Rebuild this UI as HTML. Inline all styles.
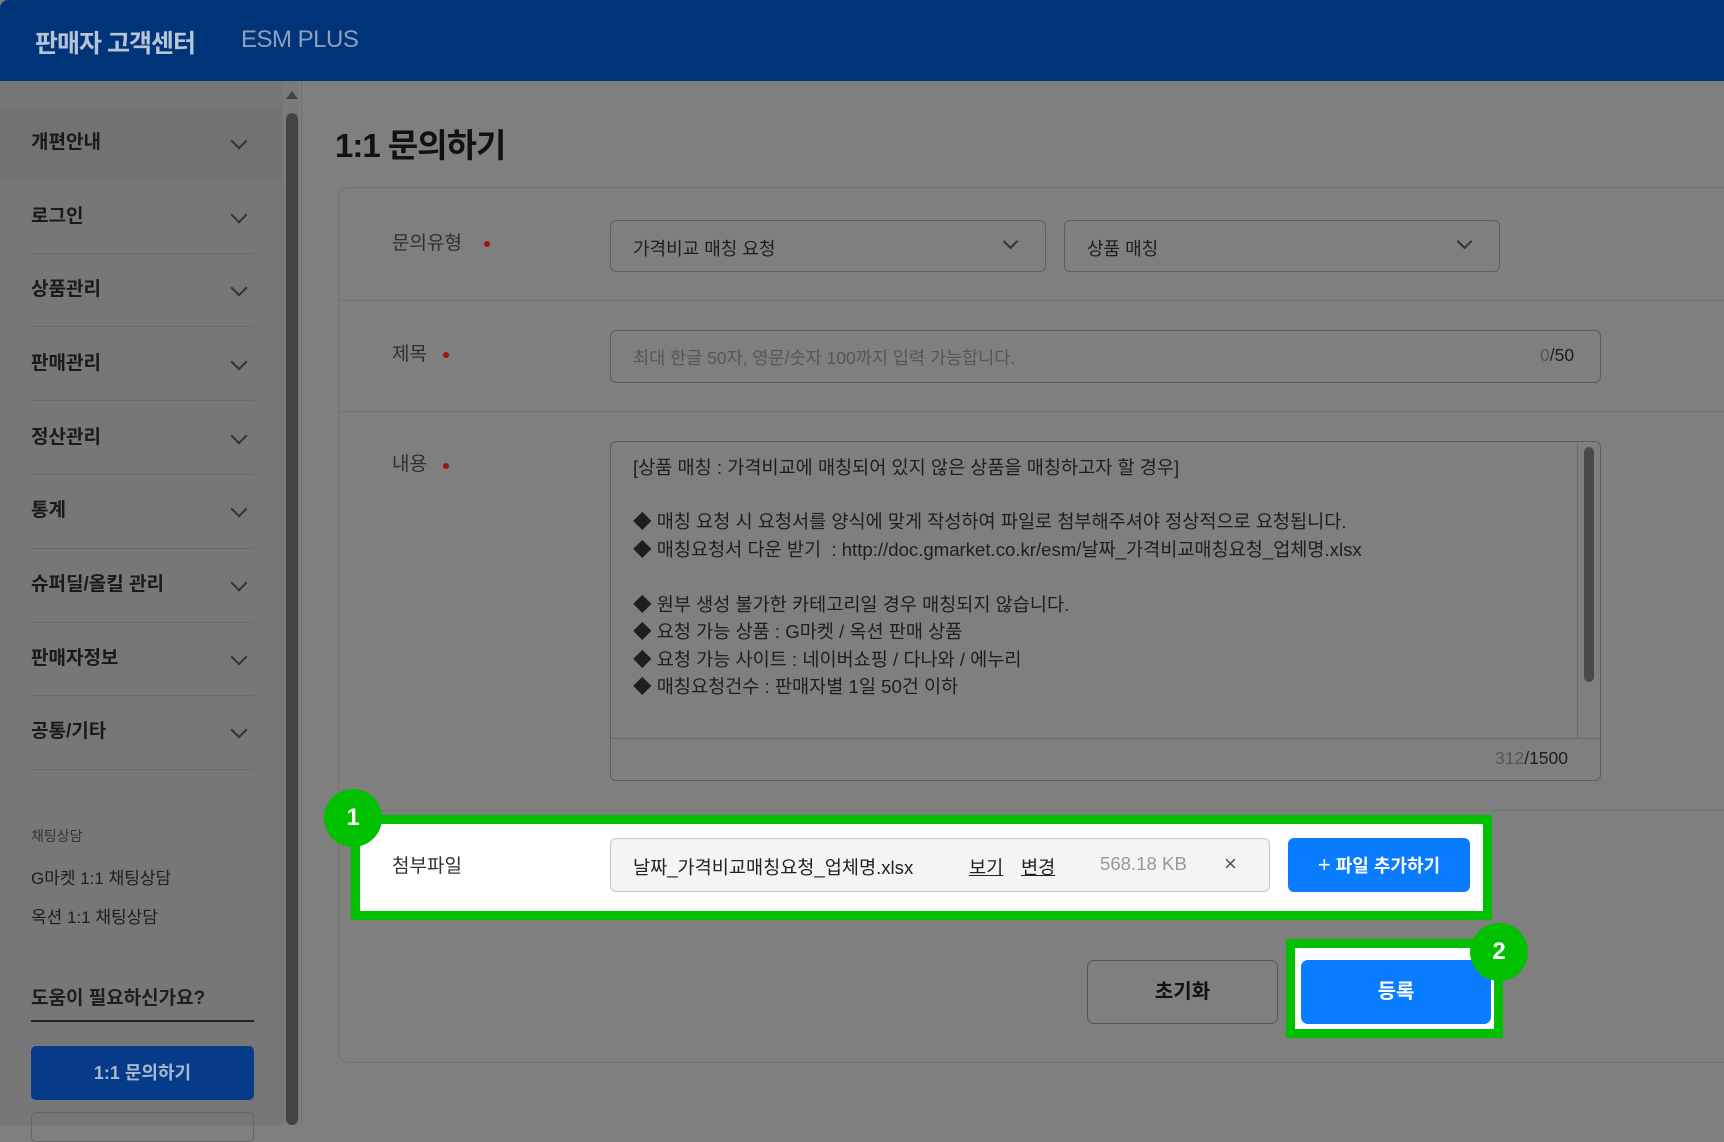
<!DOCTYPE html>
<html><head><meta charset="utf-8"><style>
*{margin:0;padding:0;box-sizing:border-box}
body{width:1724px;height:1125px;overflow:hidden;background:#7f7f7f;font-family:"Liberation Sans","Noto Sans CJK KR",sans-serif;position:relative;color:#1e1e1e}
.a{position:absolute}
.hdr{left:0;top:0;width:1724px;height:81px;background:#003478;border-top-left-radius:8px}
.side{left:0;top:81px;width:284px;height:1044px;background:#777}
.item{left:31px;font-size:19px;font-weight:bold;color:#1a1a1a;line-height:24px}
.chev{left:233px;width:12px;height:12px;border-right:2px solid #333;border-bottom:2px solid #333;transform:rotate(45deg)}
.sep{left:31px;width:223px;height:1px;background:#6a6a6a}
.lbl{left:392px;font-size:19px;color:#2e2e2e;line-height:24px}
.dot{width:6px;height:6px;border-radius:50%;background:#a81010}
.box{border:1px solid #5e5e5e;border-radius:6px;background:#7f7f7f}
.ta{font-size:18.6px;color:#1e1e1e;left:633px;line-height:22px;white-space:nowrap}
.hr{left:338px;width:1386px;height:1px;background:#747474}
.badge{width:58px;height:58px;border-radius:50%;background:#00c000;color:#fff;font-weight:bold;font-size:24px;text-align:center;line-height:58px}
</style></head><body>
<div class="a hdr"></div>
<div class="a" style="left:35px;top:24px;font-size:25px;font-weight:bold;color:#b7c3d6;letter-spacing:-1px">판매자 고객센터</div>
<div class="a" style="left:241px;top:26px;font-size:24px;color:#8d9fbd;letter-spacing:-0.5px">ESM PLUS</div>

<div class="a side"></div>
<div class="a" style="left:0;top:107px;width:282px;height:72px;background:#727272"></div>
<div class="a" style="left:285px;top:81px;width:14px;height:1044px;background:#7a7a7a"></div>
<div class="a" style="left:286px;top:91px;width:0;height:0;border-left:6px solid transparent;border-right:6px solid transparent;border-bottom:8px solid #444"></div>
<div class="a" style="left:286px;top:113px;width:12px;height:1012px;background:#444;border-radius:6px"></div>
<div class="a" style="left:301px;top:81px;width:1px;height:1044px;background:#727272"></div>

<div class="a item" style="top:131px">개편안내</div><div class="a chev" style="top:135px"></div>
<div class="a sep" style="top:253px"></div>
<div class="a item" style="top:205px">로그인</div><div class="a chev" style="top:209px"></div>
<div class="a item" style="top:278px">상품관리</div><div class="a chev" style="top:282px"></div>
<div class="a sep" style="top:326px"></div>
<div class="a item" style="top:352px">판매관리</div><div class="a chev" style="top:356px"></div>
<div class="a sep" style="top:400px"></div>
<div class="a item" style="top:426px">정산관리</div><div class="a chev" style="top:430px"></div>
<div class="a sep" style="top:474px"></div>
<div class="a item" style="top:499px">통계</div><div class="a chev" style="top:503px"></div>
<div class="a sep" style="top:548px"></div>
<div class="a item" style="top:573px">슈퍼딜/올킬 관리</div><div class="a chev" style="top:577px"></div>
<div class="a sep" style="top:622px"></div>
<div class="a item" style="top:647px">판매자정보</div><div class="a chev" style="top:651px"></div>
<div class="a sep" style="top:695px"></div>
<div class="a item" style="top:720px">공통/기타</div><div class="a chev" style="top:724px"></div>
<div class="a sep" style="top:769px"></div>
<div class="a" style="left:31px;top:826px;font-size:14px;color:#333">채팅상담</div>
<div class="a" style="left:31px;top:864px;font-size:17px;color:#1e1e1e">G마켓 1:1 채팅상담</div>
<div class="a" style="left:31px;top:903px;font-size:17px;color:#1e1e1e">옥션 1:1 채팅상담</div>
<div class="a" style="left:31px;top:983px;font-size:19px;font-weight:bold;color:#1e1e1e">도움이 필요하신가요?</div>
<div class="a" style="left:31px;top:1020px;width:223px;height:2px;background:#222"></div>
<div class="a" style="left:31px;top:1046px;width:223px;height:54px;background:#063b8a;border-radius:5px;color:#a9b7cf;font-size:18px;font-weight:bold;text-align:center;line-height:54px">1:1 문의하기</div>
<div class="a" style="left:31px;top:1112px;width:223px;height:30px;border:1px solid #666;border-radius:5px"></div>

<div class="a" style="left:335px;top:119px;font-size:33px;font-weight:bold;color:#111;letter-spacing:-1px">1:1 문의하기</div>
<div class="a" style="left:338px;top:187px;width:1400px;height:876px;border:1px solid #737373;border-radius:10px"></div>

<div class="a lbl" style="top:232px">문의유형</div><div class="a dot" style="left:484px;top:241px"></div>
<div class="a box" style="left:610px;top:220px;width:436px;height:52px"></div>
<div class="a" style="left:633px;top:235px;font-size:18px">가격비교 매칭 요청</div>
<div class="a chev" style="left:1005px;top:236px;width:11px;height:11px"></div>
<div class="a box" style="left:1064px;top:220px;width:436px;height:52px"></div>
<div class="a" style="left:1087px;top:235px;font-size:18px">상품 매칭</div>
<div class="a chev" style="left:1459px;top:236px;width:11px;height:11px"></div>
<div class="a hr" style="top:300px"></div>

<div class="a lbl" style="top:343px">제목</div><div class="a dot" style="left:443px;top:352px"></div>
<div class="a box" style="left:610px;top:330px;width:991px;height:53px"></div>
<div class="a" style="left:633px;top:345px;font-size:17.5px;color:#565656">최대 한글 50자, 영문/숫자 100까지 입력 가능합니다.</div>
<div class="a" style="left:1540px;top:345px;font-size:17.5px;color:#1e1e1e"><span style="color:#565656">0</span>/50</div>
<div class="a hr" style="top:411px"></div>

<div class="a lbl" style="top:453px">내용</div><div class="a dot" style="left:443px;top:463px"></div>
<div class="a box" style="left:610px;top:441px;width:991px;height:340px"></div>
<div class="a" style="left:1577px;top:442px;width:1px;height:296px;background:#6a6a6a"></div>
<div class="a" style="left:1584px;top:447px;width:10px;height:235px;background:#4a4a4a;border-radius:5px"></div>
<div class="a" style="left:611px;top:738px;width:989px;height:1px;background:#6a6a6a"></div>
<div class="a ta" style="top:457px">[상품 매칭 : 가격비교에 매칭되어 있지 않은 상품을 매칭하고자 할 경우]</div>
<div class="a ta" style="top:511px">◆ 매칭 요청 시 요청서를 양식에 맞게 작성하여 파일로 첨부해주셔야 정상적으로 요청됩니다.</div>
<div class="a ta" style="top:539px">◆ 매칭요청서 다운 받기 &nbsp;: http://doc.gmarket.co.kr/esm/날짜_가격비교매칭요청_업체명.xlsx</div>
<div class="a ta" style="top:594px">◆ 원부 생성 불가한 카테고리일 경우 매칭되지 않습니다.</div>
<div class="a ta" style="top:621px">◆ 요청 가능 상품 : G마켓 / 옥션 판매 상품</div>
<div class="a ta" style="top:649px">◆ 요청 가능 사이트 : 네이버쇼핑 / 다나와 / 에누리</div>
<div class="a ta" style="top:676px">◆ 매칭요청건수 : 판매자별 1일 50건 이하</div>
<div class="a" style="left:1495px;top:748px;font-size:17.5px;color:#1e1e1e"><span style="color:#565656">312</span>/1500</div>
<div class="a hr" style="top:810px"></div>

<div class="a" style="left:351px;top:815px;width:1141px;height:105px;border:9px solid #00c000;background:#fff"></div>
<div class="a badge" style="left:324px;top:789px">1</div>
<div class="a" style="left:392px;top:851px;font-size:19px;color:#333">첨부파일</div>
<div class="a" style="left:610px;top:838px;width:660px;height:54px;background:#f4f4f4;border:1px solid #c8c8c8;border-radius:6px"></div>
<div class="a" style="left:633px;top:853px;font-size:18.6px;color:#222">날짜_가격비교매칭요청_업체명.xlsx</div>
<div class="a" style="left:969px;top:853px;font-size:18.6px;color:#222;text-decoration:underline">보기</div>
<div class="a" style="left:1021px;top:853px;font-size:18.6px;color:#222;text-decoration:underline">변경</div>
<div class="a" style="left:1100px;top:853px;font-size:18.6px;color:#999">568.18 KB</div>
<div class="a" style="left:1224px;top:851px;font-size:22px;color:#555">×</div>
<div class="a" style="left:1288px;top:838px;width:182px;height:54px;background:#0a7cff;border-radius:6px;color:#fff;font-size:18px;font-weight:bold;text-align:center;line-height:54px"><span style="font-weight:normal;font-size:22px">+</span> 파일 추가하기</div>

<div class="a" style="left:1087px;top:960px;width:191px;height:64px;border:1px solid #555;border-radius:7px;font-size:20px;font-weight:bold;text-align:center;line-height:62px;color:#111">초기화</div>
<div class="a" style="left:1286px;top:939px;width:217px;height:99px;border:9px solid #00c000;background:#fff"></div>
<div class="a" style="left:1301px;top:960px;width:190px;height:64px;background:#0a7cff;border-radius:7px;color:#fff;font-size:20px;font-weight:bold;text-align:center;line-height:64px">등록</div>
<div class="a badge" style="left:1470px;top:923px">2</div>
</body></html>
